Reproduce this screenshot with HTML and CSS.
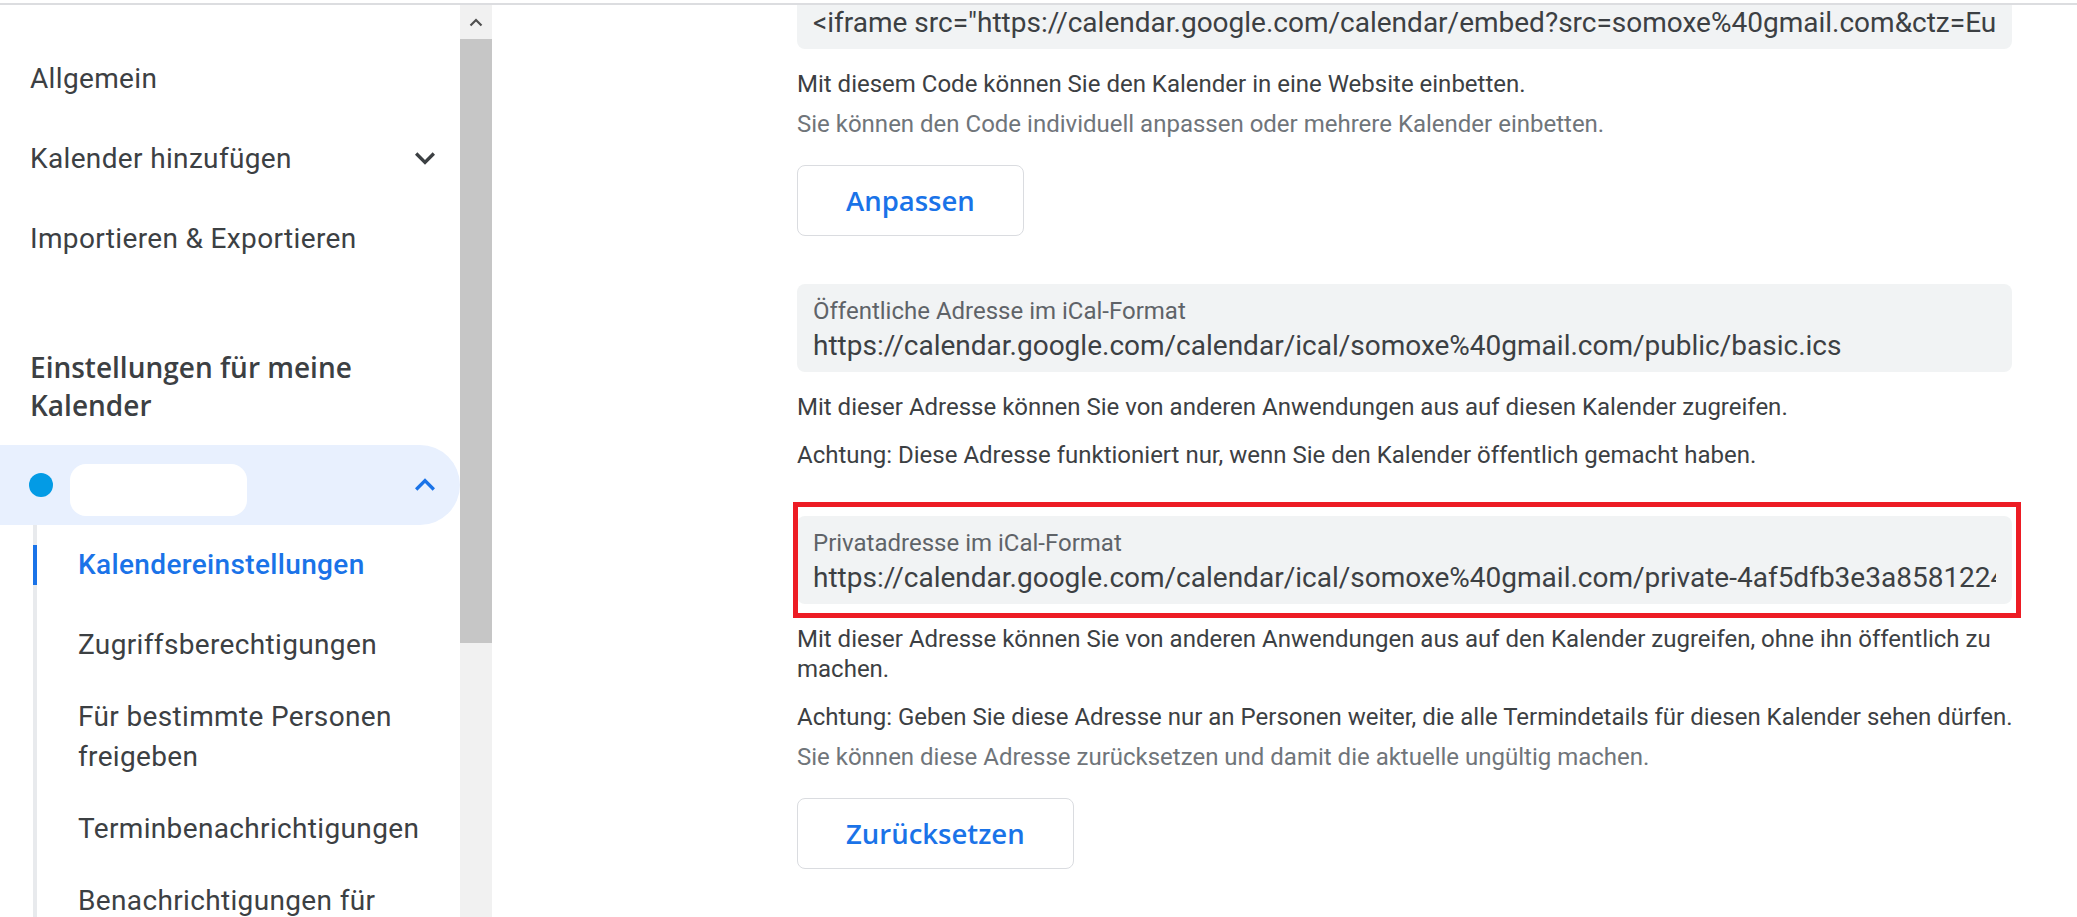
FILE: index.html
```html
<!DOCTYPE html>
<html lang="de">
<head>
  <meta charset="utf-8">
  <title>Einstellungen</title>
  <link rel="stylesheet" href="styles.css">
</head>
<body>

  <div class="topbar"></div>

  <div class="app">

    <aside class="sidebar">
      <nav class="nav">
        <div class="nav-item">Allgemein</div>
        <div class="nav-item">
          <span>Kalender hinzufügen</span>
          <svg class="chev" viewBox="0 0 24 24"><path d="M16.59 8.59L12 13.17 7.41 8.59 6 10l6 6 6-6z"/></svg>
        </div>
        <div class="nav-item">Importieren &amp; Exportieren</div>

        <h2 class="nav-heading">Einstellungen für meine Kalender</h2>

        <div class="cal-row">
          <span class="cal-dot"></span>
          <span class="cal-name"></span>
          <svg class="chev chev-up" viewBox="0 0 24 24"><path d="M7.41 15.41L12 10.83l4.59 4.58L18 14l-6-6-6 6z"/></svg>
        </div>

        <ul class="sub-list">
          <li class="sub-item active">Kalendereinstellungen</li>
          <li class="sub-item">Zugriffsberechtigungen</li>
          <li class="sub-item">Für bestimmte Personen freigeben</li>
          <li class="sub-item">Terminbenachrichtigungen</li>
          <li class="sub-item">Benachrichtigungen für ganztägige Termine</li>
          <li class="sub-item">Weitere Benachrichtigungen</li>
        </ul>
      </nav>

      <div class="scrollbar">
        <div class="sb-arrow">
          <svg viewBox="0 0 14 9"><polyline points="1.5,7.5 7,2 12.5,7.5"/></svg>
        </div>
        <div class="sb-thumb"></div>
        <div class="sb-track"></div>
      </div>
    </aside>

    <main class="main">
      <div class="content">

        <div class="field field-code">
          <div class="field-value">&lt;iframe src="https://calendar.google.com/calendar/embed?src=somoxe%40gmail.com&amp;ctz=Europe%2FBerlin" style="border: 0" width="800" height="600" frameborder="0" scrolling="no"&gt;&lt;/iframe&gt;</div>
        </div>
        <p class="note">Mit diesem Code können Sie den Kalender in eine Website einbetten.</p>
        <p class="hint">Sie können den Code individuell anpassen oder mehrere Kalender einbetten.</p>
        <button class="btn">Anpassen</button>

        <div class="field">
          <div class="field-label">Öffentliche Adresse im iCal-Format</div>
          <div class="field-value">https://calendar.google.com/calendar/ical/somoxe%40gmail.com/public/basic.ics</div>
        </div>
        <p class="note">Mit dieser Adresse können Sie von anderen Anwendungen aus auf diesen Kalender zugreifen.</p>
        <p class="note">Achtung: Diese Adresse funktioniert nur, wenn Sie den Kalender öffentlich gemacht haben.</p>

        <div class="field marked">
          <div class="field-label">Privatadresse im iCal-Format</div>
          <div class="field-value">https://calendar.google.com/calendar/ical/somoxe%40gmail.com/private-4af5dfb3e3a8581224c7b1e0/basic.ics</div>
        </div>
        <p class="note">Mit dieser Adresse können Sie von anderen Anwendungen aus auf den Kalender zugreifen, ohne ihn öffentlich zu machen.</p>
        <p class="note">Achtung: Geben Sie diese Adresse nur an Personen weiter, die alle Termindetails für diesen Kalender sehen dürfen.</p>
        <p class="hint">Sie können diese Adresse zurücksetzen und damit die aktuelle ungültig machen.</p>
        <button class="btn">Zurücksetzen</button>

      </div>
    </main>

  </div>

</body>
</html>
```

FILE: styles.css
```css
body {
   margin: 0;
   background: #fff;
   color: #3c4043;
   font-family: Roboto, "Liberation Sans", sans-serif;
   height: 917px;
   overflow: hidden;
}

.topbar {
   height: 3px;
   border-bottom: 2px solid #dcdde0;
}

.app {
   display: flex;
   height: 912px;
   overflow: hidden;
}

/* sidebar */

.sidebar {
   display: flex;
   width: 492px;
   flex-shrink: 0;
}

.nav {
   width: 460px;
   padding-top: 33px;
}

.nav-item {
   display: flex;
   align-items: center;
   justify-content: space-between;
   height: 80px;
   padding: 0 15px 0 30px;
   font-size: 28px;
   letter-spacing: 0.35px;
}

.chev {
   width: 40px;
   height: 40px;
   fill: #3c4043;
}

.chev-up {
   fill: #1a73e8;
}

.nav-heading {
   margin: 70px 0 0;
   padding: 0 24px 0 30px;
   font-family: "Open Sans", sans-serif;
   font-size: 28px;
   font-weight: 600;
   line-height: 38px;
   color: #3c4043;
}

.cal-row {
   display: flex;
   align-items: center;
   height: 80px;
   margin-top: 21px;
   padding: 0 15px 0 29px;
   background: #e8f0fe;
   border-radius: 0 40px 40px 0;
}

.cal-dot {
   width: 24px;
   height: 24px;
   border-radius: 50%;
   background: #039be5;
}

.cal-name {
   width: 177px;
   height: 52px;
   margin: 10px auto 0 17px;
   border-radius: 16px;
   background: #fff;
}

.sub-list {
   list-style: none;
   margin: 0 0 0 33px;
   padding: 0;
   border-left: 4px solid #e8eaed;
}

.sub-item {
   position: relative;
   display: flex;
   align-items: center;
   min-height: 80px;
   box-sizing: border-box;
   padding: 12px 20px 12px 41px;
   font-size: 28px;
   line-height: 40px;
   letter-spacing: 0.35px;
}

.sub-item.active {
   color: #1a73e8;
   font-weight: 500;
}

.sub-item.active:before {
   content: '';
   position: absolute;
   left: -4px;
   top: 20px;
   width: 4px;
   height: 40px;
   background: #1a73e8;
}

.scrollbar {
   display: flex;
   flex-direction: column;
   width: 32px;
   background: #f1f1f1;
}

.sb-arrow {
   height: 34px;
   display: flex;
   align-items: center;
   justify-content: center;
}

.sb-arrow svg {
   width: 14px;
   height: 9px;
   fill: none;
   stroke: #505050;
   stroke-width: 2.2;
}

.sb-thumb {
   height: 604px;
   background: #c6c6c6;
}

.sb-track {
   flex: 1;
}

/* main column */

.main {
   flex: 1;
   padding-left: 305px;
}

.content {
   width: 1215px;
   margin-top: -14px;
}

.field {
   margin-top: 48px;
   padding: 12px 16px 6px;
   background: #f1f3f4;
   border-radius: 8px;
}

.field-code {
   margin-top: 0;
}

.field-label {
   font-size: 24px;
   line-height: 30px;
   color: #5f6368;
}

.field-value {
   font-size: 28px;
   line-height: 40px;
   color: #3c4043;
   white-space: nowrap;
   overflow: hidden;
}

.marked {
   position: relative;
   margin-top: 46px;
}

.marked:after {
   content: '';
   position: absolute;
   top: -14px;
   left: -4px;
   right: -9px;
   bottom: -14px;
   border: 5px solid #ed1c24;
}

.note, .hint {
   margin: 18px -14px 0 0;
   font-size: 24px;
   line-height: 30px;
}

.field + .note {
   margin-top: 20px;
}

.hint {
   margin-top: 10px;
   color: #70757a;
}

.btn {
   display: block;
   height: 71px;
   margin-top: 26px;
   padding: 0 48px;
   background: #fff;
   border: 1px solid #dadce0;
   border-radius: 8px;
   font-family: "Open Sans", sans-serif;
   font-size: 27.5px;
   font-weight: 600;
   color: #1a73e8;
}
```
